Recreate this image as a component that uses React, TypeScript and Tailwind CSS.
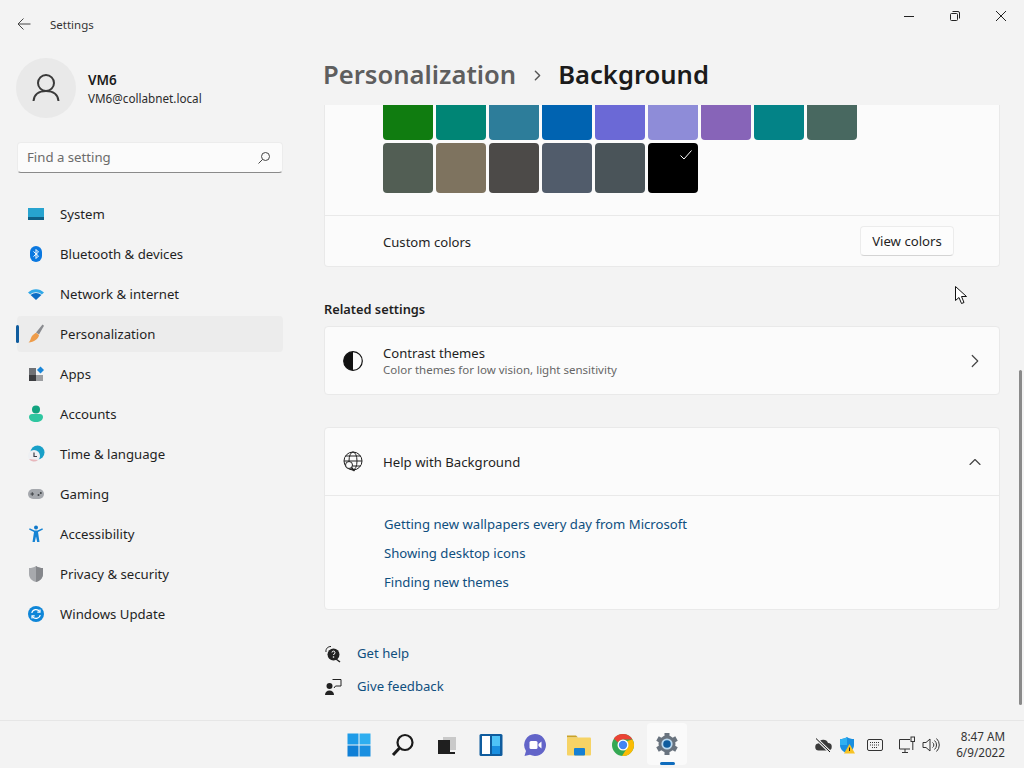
import type { ReactNode } from "react";
import { ChevronRight, ChevronUp } from "lucide-react";

const font = "font-['Noto_Sans','Open_Sans',sans-serif]";

/* sidebar icons, all on a 20x20 box */
const navIcons: Record<string, ReactNode> = {
  System: (
    <svg width="18" height="14" viewBox="0 0 18 14">
      <rect x="1" y="1" width="16" height="12" fill="#27a3cf" />
      <rect x="1" y="10" width="16" height="3" fill="#0f5f86" />
    </svg>
  ),
  Bluetooth: (
    <svg width="14" height="18" viewBox="0 0 14 18">
      <rect x="1" y="1" width="12" height="16" rx="6" fill="#0a78e0" />
      <path d="M4.500 6.500 9.500 11 7 13.500V4.500L9.500 7 4.500 11.500" fill="none" stroke="#fff" strokeWidth="1" />
    </svg>
  ),
  Network: (
    <svg width="18" height="14" viewBox="0 0 18 14">
      <path d="M1 5.500C5.500 1 12.500 1 17 5.500L14.800 7.600C11.500 4.600 6.500 4.600 3.200 7.600Z" fill="#2fa8e8" />
      <path d="M3.600 8C6.700 5.200 11.300 5.200 14.400 8L9 13Z" fill="#0a6cc4" />
    </svg>
  ),
  Personalization: (
    <svg width="18" height="20" viewBox="0 0 18 20">
      <path d="M9 8.500 15.500 0.500 17 1.700 12 10.500Z" fill="#8a8b8f" />
      <path d="M9 8.800 12 11C11.500 15 7 18 1.500 18.500 3.500 17 3.500 15 4.500 12.800 5.500 11 7.500 9.800 9 8.800Z" fill="#ee9c4a" />
    </svg>
  ),
  Apps: (
    <svg width="16" height="16" viewBox="0 0 16 16">
      <rect x="1" y="2" width="7" height="7" fill="#6f7175" />
      <rect x="1" y="9" width="7" height="6" fill="#3c3d40" />
      <rect x="8" y="9" width="7" height="6" fill="#9b9da0" />
      <rect x="10" y="1.500" width="5" height="5" fill="#1a86d8" transform="rotate(45 12.500 4)" />
    </svg>
  ),
  Accounts: (
    <svg width="16" height="18" viewBox="0 0 16 18">
      <circle cx="8" cy="4.500" r="4" fill="#11a37f" />
      <path d="M1 12c0-2 1.500-3 3-3h8c1.500 0 3 1 3 3 0 3-3 5-7 5s-7-2-7-5Z" fill="#2fc6a0" />
    </svg>
  ),
  Time: (
    <svg width="18" height="18" viewBox="0 0 18 18">
      <circle cx="10.500" cy="7.500" r="7" fill="#19a0c8" />
      <circle cx="7" cy="11" r="6" fill="#eef0f3" />
      <path d="M7 7.500V11.500H10" fill="none" stroke="#3a3f46" strokeWidth="1.200" />
      <path d="M2 14a6 6 0 0 0 9 1Z" fill="#e8b7bb" />
    </svg>
  ),
  Gaming: (
    <svg width="18" height="12" viewBox="0 0 18 12">
      <rect x="1" y="1" width="16" height="10" rx="5" fill="#a5a8ad" />
      <path d="M3.500 6H7M5.250 4.200V7.800" stroke="#3f4246" strokeWidth="1" />
      <circle cx="11.500" cy="7" r="1" fill="#3f4246" />
      <circle cx="13.800" cy="5" r="1" fill="#3f4246" />
    </svg>
  ),
  Accessibility: (
    <svg width="16" height="18" viewBox="0 0 16 18">
      <circle cx="8" cy="2.500" r="2" fill="#0f78c9" />
      <path d="M1 4.500 6 7 4.500 17H6.800L8 11.500 9.200 17H11.500L10 7 15 4.500 14.300 3.300 9.500 5.500H6.500L1.700 3.300Z" fill="#1583d4" />
    </svg>
  ),
  Privacy: (
    <svg width="16" height="18" viewBox="0 0 16 18">
      <path d="M8 1C10 2.500 12.500 3 15 3V9C15 13 12 16 8 17 4 16 1 13 1 9V3C3.500 3 6 2.500 8 1Z" fill="#a7a9ad" />
      <path d="M8 1C10 2.500 12.500 3 15 3V9C15 13 12 16 8 17Z" fill="#85878b" />
    </svg>
  ),
  Update: (
    <svg width="18" height="18" viewBox="0 0 18 18">
      <circle cx="9" cy="9" r="8" fill="#0f86d8" />
      <path d="M4.800 8A4.300 4.300 0 0 1 12.600 6.500M13.200 10A4.300 4.300 0 0 1 5.400 11.500" fill="none" stroke="#fff" strokeWidth="1.200" />
      <path d="M13 4.500V7.200H10.300M5 13.500V10.800H7.700" fill="none" stroke="#fff" strokeWidth="1.200" />
    </svg>
  ),
};

const navItems = [
  { label: "System", icon: "System" },
  { label: "Bluetooth & devices", icon: "Bluetooth" },
  { label: "Network & internet", icon: "Network" },
  { label: "Personalization", icon: "Personalization", active: true },
  { label: "Apps", icon: "Apps" },
  { label: "Accounts", icon: "Accounts" },
  { label: "Time & language", icon: "Time" },
  { label: "Gaming", icon: "Gaming" },
  { label: "Accessibility", icon: "Accessibility" },
  { label: "Privacy & security", icon: "Privacy" },
  { label: "Windows Update", icon: "Update" },
];

const topColors = ["#107c10", "#008575", "#2d7d9a", "#0063b1", "#6b69d6", "#8e8cd8", "#8764b8", "#038387", "#486860"];
const bottomColors = ["#525e54", "#7e735f", "#4c4a48", "#515c6b", "#4a5459", "#000000"];

function Sidebar() {
  return (
    <aside className="w-[300px] shrink-0 flex flex-col">
      <div className="h-[48px] flex items-center pl-[16px]">
        <svg width="16" height="16" viewBox="0 0 16 16" fill="none" stroke="#444" strokeWidth="1">
          <path d="M14.500 8H2M7.500 2.500 2 8l5.500 5.500" />
        </svg>
        <span className="ml-[18px] mt-[1px] text-[11.500px] text-[#333]">Settings</span>
      </div>
      <div className="h-[60px] mt-[10px] ml-[16px] flex items-center">
        <div className="w-[60px] h-[60px] rounded-full bg-[#e9e9e9] flex items-center justify-center">
          <svg width="30" height="30" viewBox="0 0 30 30" fill="none" stroke="#3a3a3a" strokeWidth="2">
            <circle cx="15" cy="10" r="8" />
            <path d="M2.500 28C3 21.500 8 18 15 18s12 3.500 12.500 10" />
          </svg>
        </div>
        <div className="ml-[12px] mt-[2px] flex flex-col">
          <span className="text-[13.500px] leading-[18px] font-semibold text-[#1a1a1a]">VM6</span>
          <span className="text-[11.700px] leading-[18px] text-[#2b2b2b]">VM6@collabnet.local</span>
        </div>
      </div>
      <div className="mt-[24px] mx-[17px] h-[31px] bg-[#fbfbfb] rounded-[4px] border border-[#ececec] border-b-[#8a8a8a] flex items-center justify-between pl-[9px] pr-[11px]">
        <span className="text-[13.200px] text-[#6b6b6b]">Find a setting</span>
        <svg width="14" height="14" viewBox="0 0 14 14" fill="none" stroke="#444" strokeWidth="1">
          <circle cx="8.500" cy="5.500" r="4" />
          <path d="M5.500 8.500 1.500 12.500" />
        </svg>
      </div>
      <nav className="mt-[23px] flex flex-col gap-[4px]">
        {navItems.map((item) => (
          <div
            key={item.label}
            className={`relative mx-[17px] h-[36px] rounded-[4px] flex items-center ${item.active ? "bg-[#ececec]" : ""}`}
          >
            {item.active && <div className="absolute left-[-1px] top-[9px] w-[3px] h-[18px] rounded-full bg-[#0f5c9e]" />}
            <div className="ml-[9px] w-[20px] h-[20px] flex items-center justify-center">{navIcons[item.icon]}</div>
            <span className="ml-[14px] mt-[2px] text-[13.200px] text-[#1f1f1f]">{item.label}</span>
          </div>
        ))}
      </nav>
    </aside>
  );
}

function Card({ children, className = "" }: { children: ReactNode; className?: string }) {
  return <div className={`w-[676px] bg-[#fbfbfb] border border-[#e9e9e9] rounded-[4px] ${className}`}>{children}</div>;
}

function Main() {
  return (
    <main className="flex-1 min-w-0 flex flex-col">
      <div className="h-[105px] shrink-0 flex flex-col">
        <div className="h-[36px] flex justify-end text-[#222]">
          <div className="w-[46px] h-[32px] flex items-center justify-center">
            <svg width="10" height="10" viewBox="0 0 10 10" stroke="#222" strokeWidth="1"><path d="M0 5.500H10" /></svg>
          </div>
          <div className="w-[46px] h-[32px] flex items-center justify-center">
            <svg width="10" height="10" viewBox="0 0 10 10" fill="none" stroke="#222" strokeWidth="1">
              <rect x="0.500" y="2.500" width="7" height="7" rx="1" />
              <path d="M2.500 0.500H8a1.500 1.500 0 0 1 1.500 1.500V7.500" />
            </svg>
          </div>
          <div className="w-[46px] h-[32px] flex items-center justify-center">
            <svg width="10" height="10" viewBox="0 0 10 10" stroke="#222" strokeWidth="1"><path d="M0 0 10 10M10 0 0 10" /></svg>
          </div>
        </div>
        <div className="ml-[23px] mt-[17px] h-[44px] flex items-center text-[25.600px] font-semibold">
          <span className="text-[#5e5e5e]">Personalization</span>
          <ChevronRight className="mx-[12.500px] text-[#555]" size={17} strokeWidth={2} />
          <span className="text-[#1b1b1b]">Background</span>
        </div>
      </div>

      <div className="flex-1 min-h-0 overflow-hidden pl-[24px]">
        <Card className="border-t-0 rounded-t-none">
          <div className="pl-[58px] pb-[22px] flex flex-col gap-[3px] border-b border-[#e9e9e9]">
            <div className="flex gap-[3px]">
              {topColors.map((c) => (
                <div key={c} className="w-[50px] h-[35px] rounded-b-[4px]" style={{ backgroundColor: c }} />
              ))}
            </div>
            <div className="flex gap-[3px]">
              {bottomColors.map((c) => (
                <div key={c} className="relative w-[50px] h-[50px] rounded-[4px]" style={{ backgroundColor: c }}>
                  {c === "#000000" && (
                    <svg className="absolute right-[5px] top-[6px]" width="14" height="12" viewBox="0 0 14 12" fill="none" stroke="#fff" strokeWidth="1">
                      <path d="M1.500 6.500 5 10 12.500 1.500" />
                    </svg>
                  )}
                </div>
              ))}
            </div>
          </div>
          <div className="h-[50px] pl-[58px] pr-[45px] flex items-center justify-between">
            <span className="mt-[4px] text-[13.100px] text-[#1f1f1f]">Custom colors</span>
            <div className="w-[94px] h-[30px] -mt-[1px] pt-[2px] bg-[#fdfdfd] border border-[#ececec] border-b-[#d4d4d4] rounded-[4px] flex items-center justify-center text-[13.200px] text-[#1f1f1f]">
              View colors
            </div>
          </div>
        </Card>

        <div className="mt-[32px] h-[20px] pt-[2px] flex items-center text-[12.800px] font-semibold text-[#1f1f1f]">Related settings</div>

        <Card className="mt-[7px] h-[69px] flex items-center">
          <div className="w-[56px] mr-[2px] flex justify-center">
            <svg width="20" height="20" viewBox="0 0 20 20">
              <circle cx="10" cy="10" r="9.300" fill="none" stroke="#111" strokeWidth="1.200" />
              <path d="M10 .7a9.300 9.300 0 0 0 0 18.600Z" fill="#111" />
            </svg>
          </div>
          <div className="flex-1 flex flex-col">
            <span className="text-[13.100px] leading-[18px] text-[#1f1f1f]">Contrast themes</span>
            <span className="text-[11.500px] leading-[16px] text-[#666]">Color themes for low vision, light sensitivity</span>
          </div>
          <ChevronRight className="mr-[13px] text-[#444]" size={22} strokeWidth={1.300} />
        </Card>

        <Card className="mt-[32px]">
          <div className="h-[68px] flex items-center border-b border-[#e9e9e9]">
            <div className="w-[56px] mr-[2px] flex justify-center">
              <svg width="22" height="22" viewBox="0 0 22 22" fill="none" stroke="#222" strokeWidth="1">
                <circle cx="11" cy="10" r="9" />
                <ellipse cx="11" cy="10" rx="4" ry="9" />
                <path d="M2 10H20M3.500 5H18.500M3.500 15H18.500" />
                <circle cx="7" cy="14" r="3.500" fill="#fbfbfb" />
                <path d="M9.500 16.500 12.500 20" strokeWidth="1.500" />
              </svg>
            </div>
            <span className="flex-1 mt-[2px] text-[13.200px] text-[#1f1f1f]">Help with Background</span>
            <ChevronUp className="mr-[14px] text-[#444]" size={20} strokeWidth={1.400} />
          </div>
          <div className="pl-[59px] pt-[18px] pb-[17px] flex flex-col gap-[9px] text-[13.150px] text-[#0f4f7f]">
            <span className="h-[20px] leading-[20px]">Getting new wallpapers every day from Microsoft</span>
            <span className="h-[20px] leading-[20px]">Showing desktop icons</span>
            <span className="h-[20px] leading-[20px]">Finding new themes</span>
          </div>
        </Card>

        <div className="mt-[34px] flex flex-col gap-[13px] text-[13.150px] text-[#0f4f7f]">
          <div className="h-[20px] flex items-center">
            <svg width="18" height="18" viewBox="0 0 18 18" fill="#222">
              <circle cx="9.500" cy="9.500" r="6" />
              <path d="M12 14 16 17" stroke="#222" strokeWidth="1.500" />
              <path d="M2 7C1.500 3.500 4 1.500 7 1.500" fill="none" stroke="#222" strokeWidth="1" />
              <circle cx="9.500" cy="12" r=".8" fill="#fff" />
              <path d="M8 7.500a1.500 1.500 0 1 1 2 1.500L9.500 10" fill="none" stroke="#fff" strokeWidth="1" />
            </svg>
            <span className="ml-[15px]">Get help</span>
          </div>
          <div className="h-[20px] flex items-center">
            <svg width="18" height="18" viewBox="0 0 18 18">
              <circle cx="5.500" cy="8" r="3" fill="#222" />
              <path d="M1 17c0-3 2-4.500 4.500-4.500S10 14 10 17Z" fill="#222" />
              <path d="M8.500 1.500H17V8H11.500L10 10" fill="none" stroke="#222" strokeWidth="1" />
            </svg>
            <span className="ml-[15px]">Give feedback</span>
          </div>
        </div>
      </div>
    </main>
  );
}

function Taskbar() {
  return (
    <footer className="h-[48px] shrink-0 relative flex items-center bg-[#f3f3f3] border-t border-[#e6e6e6]">
      <div className="ml-[337px] flex items-center">
        {/* start */}
        <div className="w-[44px] flex justify-center">
          <svg width="24" height="24" viewBox="0 0 24 24">
            <rect x="0.500" y="0.500" width="11" height="11" fill="#1d9be8" />
            <rect x="12.500" y="0.500" width="11" height="11" fill="#2eaef0" />
            <rect x="0.500" y="12.500" width="11" height="11" fill="#0f7fd6" />
            <rect x="12.500" y="12.500" width="11" height="11" fill="#1a8fe0" />
          </svg>
        </div>
        {/* search */}
        <div className="w-[44px] flex justify-center">
          <svg width="24" height="24" viewBox="0 0 24 24" fill="none" stroke="#1a1a1a">
            <circle cx="14" cy="9.500" r="7.500" strokeWidth="2.200" />
            <path d="M8.500 15 2 22" strokeWidth="3" />
          </svg>
        </div>
        {/* task view */}
        <div className="w-[44px] flex justify-center">
          <svg width="24" height="24" viewBox="0 0 24 24">
            <rect x="8" y="4" width="13" height="13" fill="#c9c9c9" />
            <rect x="3" y="7" width="12" height="14" fill="#1f1f1f" />
            <rect x="3" y="19" width="17" height="2" fill="#1f1f1f" />
          </svg>
        </div>
        {/* widgets */}
        <div className="w-[44px] flex justify-center">
          <svg width="24" height="24" viewBox="0 0 24 24">
            <rect x="0.500" y="1" width="23" height="22" rx="1.500" fill="#0f5c9e" />
            <rect x="3" y="3" width="8" height="18" fill="#fff" />
            <rect x="13" y="3" width="8" height="18" fill="#4fc3f7" />
            <rect x="13" y="13" width="8" height="8" fill="#1a8fe0" />
          </svg>
        </div>
        {/* chat */}
        <div className="w-[44px] flex justify-center">
          <svg width="24" height="24" viewBox="0 0 24 24">
            <path d="M12 1a11 11 0 1 1-5 20.800L1.500 23l1.500-5A11 11 0 0 1 12 1Z" fill="#6264c8" />
            <rect x="6.500" y="8" width="8" height="8" rx="1.500" fill="#fff" />
            <path d="M15.500 11 18.500 8.500V15.500L15.500 13Z" fill="#fff" />
          </svg>
        </div>
        {/* explorer */}
        <div className="w-[44px] flex justify-center">
          <svg width="26" height="24" viewBox="0 0 26 24">
            <path d="M1 2.500h9l2 2h-11Z" fill="#c9a227" />
            <rect x="1" y="4.500" width="24" height="18" rx="1" fill="#f6d365" />
            <rect x="8" y="15" width="11" height="7.500" rx="1" fill="#1580d4" />
          </svg>
        </div>
        {/* chrome */}
        <div className="w-[44px] flex justify-center">
          <svg width="24" height="24" viewBox="0 0 24 24">
            <circle cx="12" cy="12" r="11" fill="#34a853" />
            <path d="M12 1a11 11 0 0 1 9.500 5.500H12A5.500 5.500 0 0 0 7 9.500L2.800 5.500A11 11 0 0 1 12 1Z" fill="#ea4335" />
            <path d="M21.500 6.500A11 11 0 0 1 11 23l4.800-7.500A5.500 5.500 0 0 0 16 8Z" fill="#fbbc05" />
            <circle cx="12" cy="12" r="5.500" fill="#fff" />
            <circle cx="12" cy="12" r="4.200" fill="#4285f4" />
          </svg>
        </div>
        {/* settings, the running app */}
        <div className="relative w-[40px] h-[42px] ml-[2px] mt-[-1px] bg-[#fafafa] rounded-[4px] flex items-center justify-center">
          <svg width="26" height="26" viewBox="0 0 26 26">
            <path
              d="M13 2v22M3.500 7.500l19 11M3.500 18.500l19-11"
              stroke="#69737e"
              strokeWidth="5"
            />
            <circle cx="13" cy="13" r="8.500" fill="#69737e" />
            <circle cx="13" cy="13" r="5.600" fill="#b9d8ef" />
            <circle cx="13" cy="13" r="3.800" fill="#0f5c9e" />
          </svg>
          <div className="absolute bottom-[0px] left-[13px] w-[15px] h-[3px] rounded-full bg-[#0f6cbd]" />
        </div>
      </div>

      <div className="absolute left-[814px] top-0 h-full flex items-center">
        <svg className="mr-[7px]" width="18" height="16" viewBox="0 0 18 16">
          <path d="M5 13.500a3.500 3.500 0 0 1-.5-7 5 5 0 0 1 9.500-.5 3.700 3.700 0 0 1 0 7.500Z" fill="#3a3a3a" />
          <path d="M2 1.500 16 15" stroke="#f3f3f3" strokeWidth="3" />
          <path d="M2 1.500 16 15" stroke="#111" strokeWidth="1" />
        </svg>
        <svg className="mr-[12px]" width="16" height="18" viewBox="0 0 16 18">
          <path d="M8 1C10 2.500 12.500 3 15 3V9C15 13 12 16 8 17 4 16 1 13 1 9V3C3.500 3 6 2.500 8 1Z" fill="#1a8fe0" />
          <path d="M8 1V9H1V3C3.500 3 6 2.500 8 1Z" fill="#2fb0f0" />
          <path d="M10.500 8 16 17.500H5Z" fill="#f7c325" />
          <path d="M10.500 11.500V15" stroke="#222" strokeWidth="1" />
        </svg>
        <svg className="mr-[15px]" width="16" height="12" viewBox="0 0 16 12" fill="none" stroke="#333" strokeWidth="1">
          <rect x="0.500" y="0.500" width="15" height="11" rx="1.500" />
          <path d="M3 3.500H13M3 6H13M5 8.500H11" strokeDasharray="1 1" />
        </svg>
        <svg className="mr-[6px]" width="18" height="18" viewBox="0 0 18 18" fill="none" stroke="#333" strokeWidth="1">
          <path d="M12 3.500H1.500V13H12" />
          <path d="M7 13V16M4 16.500H10" />
          <rect x="13" y="1" width="3.500" height="4.500" />
          <path d="M14.800 5.500V14" />
        </svg>
        <svg width="18" height="16" viewBox="0 0 18 16" fill="none" stroke="#333" strokeWidth="1">
          <path d="M1 5.500H4L8 2V14L4 10.500H1Z" />
          <path d="M10.500 5.500a3 3 0 0 1 0 5M12.500 3.500a6 6 0 0 1 0 9M14.500 1.500a9 9 0 0 1 0 13" />
        </svg>
      </div>

      <div className="absolute right-[19px] top-[-1px] h-full flex flex-col items-end justify-center text-[11.700px] leading-[16px] text-[#333]">
        <span>8:47 AM</span>
        <span>6/9/2022</span>
      </div>
    </footer>
  );
}

export default function App() {
  return (
    <div className={`relative w-[1024px] h-[768px] overflow-hidden flex flex-col bg-[#f3f3f3] ${font}`}>
      <div className="flex-1 min-h-0 flex">
        <Sidebar />
        <Main />
      </div>
      <Taskbar />
      {/* scrollbar thumb */}
      <div className="absolute left-[1019px] top-[370px] w-[3px] h-[335px] rounded-full bg-[#8a8a8a]" />
      {/* mouse pointer */}
      <svg className="absolute left-[954px] top-[285px]" width="14" height="20" viewBox="0 0 14 20">
        <path d="M1.500 1.500V15.500L5 12.500 7.500 18.500 10 17.500 7.500 11.500H12.500Z" fill="#fff" stroke="#111" strokeWidth="1" />
      </svg>
    </div>
  );
}
